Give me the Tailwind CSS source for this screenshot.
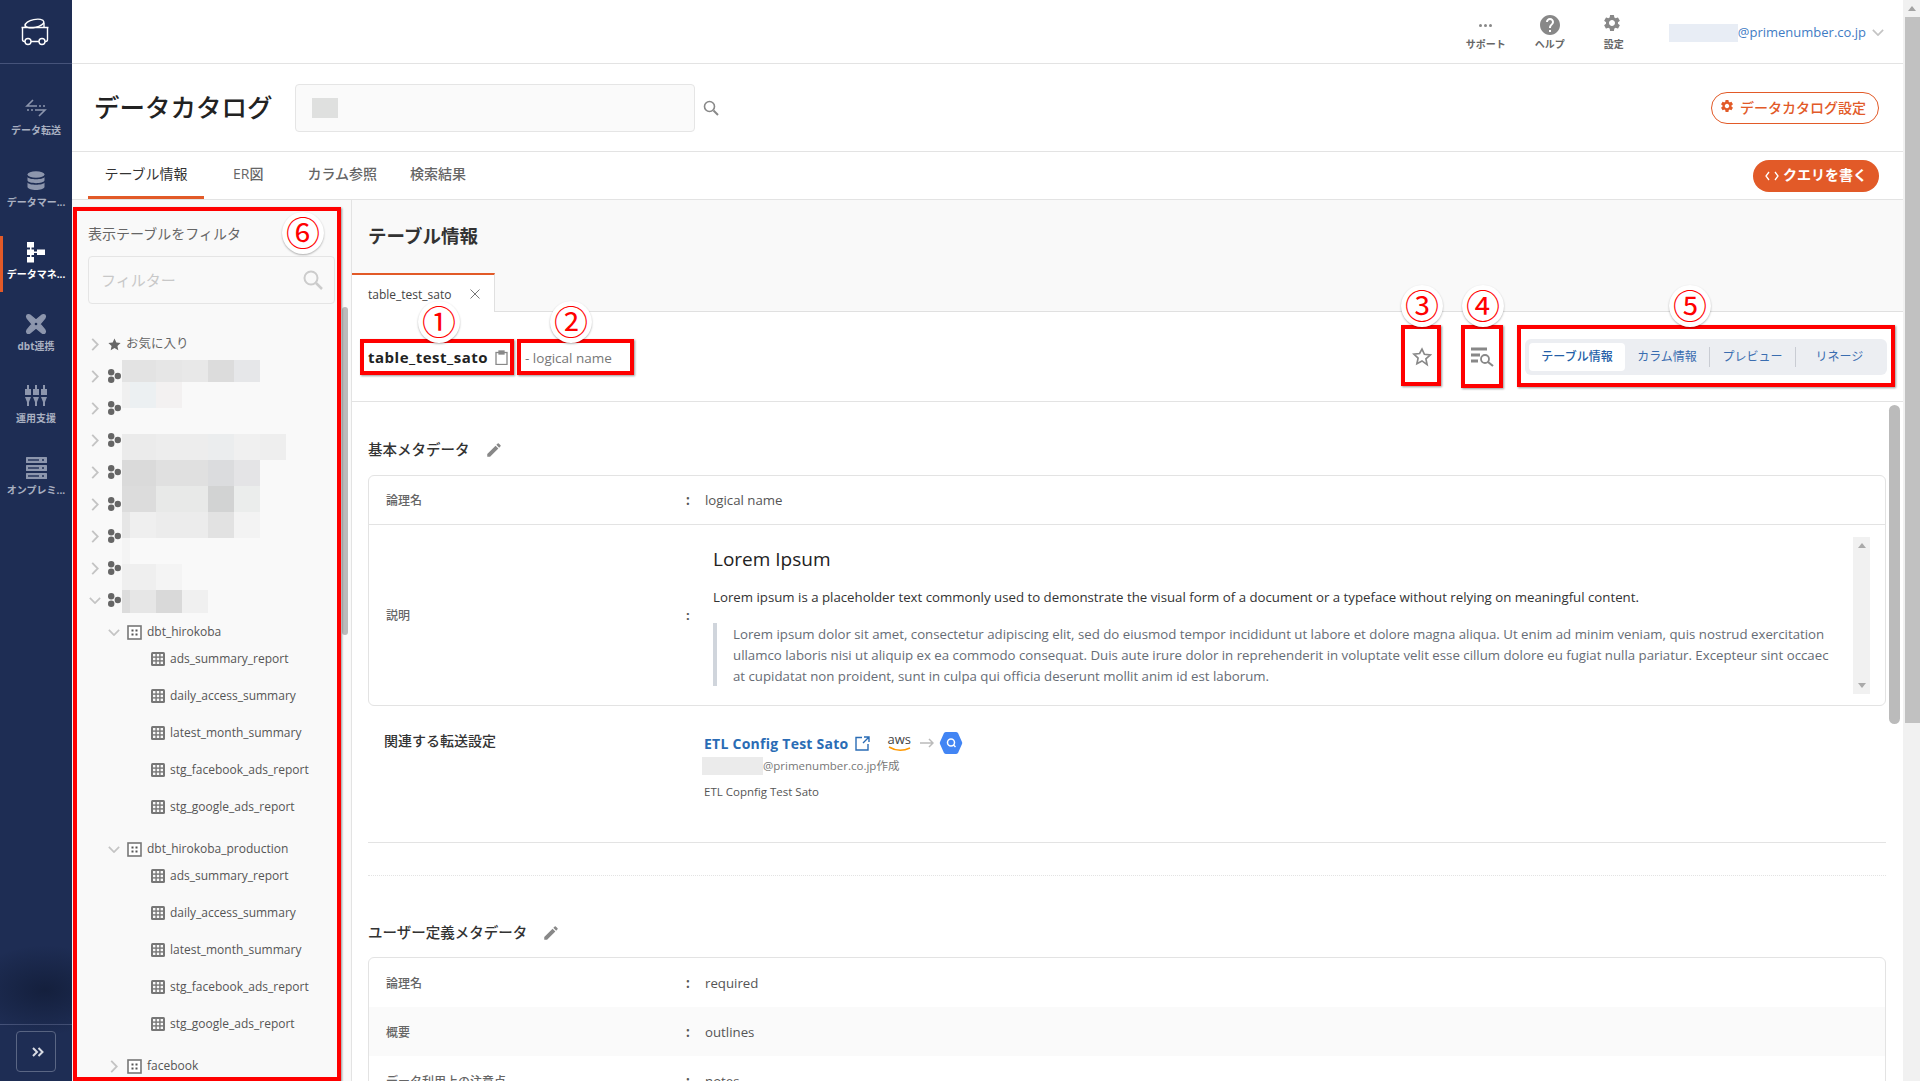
<!DOCTYPE html>
<html lang="ja">
<head>
    <meta charset="UTF-8">
    <meta name="viewport" content="width=device-width, initial-scale=1.0">
    <title>データカタログ</title>
    <script src="https://cdn.jsdelivr.net/npm/@tailwindcss/browser@4"></script>
</head>
<body class="bg-white font-['Open_Sans','Noto_Sans_CJK_JP',sans-serif] text-[#333]">

    <!-- shared icons -->
    <svg class="hidden">
        <defs>
            <symbol id="chev-r" viewBox="0 0 8 14"><polyline points="1,1 7,7 1,13" fill="none" stroke="#c4c4c4" stroke-width="2"/></symbol>
            <symbol id="chev-d" viewBox="0 0 14 8"><polyline points="1,1 7,7 13,1" fill="none" stroke="#c4c4c4" stroke-width="2"/></symbol>
            <symbol id="dataset" viewBox="0 0 13 14"><circle cx="3.2" cy="3.2" r="3.2" fill="#666"/><circle cx="3.2" cy="10.800" r="3.2" fill="#666"/><circle cx="9.800" cy="7" r="3.200" fill="#666"/></symbol>
            <symbol id="schema" viewBox="0 0 15 15"><rect x="1" y="1" width="13" height="13" fill="#fff" stroke="#777" stroke-width="1.6"/><rect x="4.5" y="4.5" width="2" height="2" fill="#555"/><rect x="8.5" y="4.5" width="2" height="2" fill="#555"/><rect x="4.5" y="8.5" width="2" height="2" fill="#555"/><rect x="8.5" y="8.5" width="2" height="2" fill="#555"/></symbol>
            <symbol id="table" viewBox="0 0 14 14"><rect width="14" height="14" rx="1.5" fill="#777"/><g fill="#f9f9f9"><rect x="2" y="2" width="2.4" height="2.4"/><rect x="5.8" y="2" width="2.4" height="2.4"/><rect x="9.6" y="2" width="2.4" height="2.4"/><rect x="2" y="5.8" width="2.4" height="2.4"/><rect x="5.8" y="5.8" width="2.4" height="2.4"/><rect x="9.6" y="5.8" width="2.4" height="2.4"/><rect x="2" y="9.6" width="2.4" height="2.4"/><rect x="5.8" y="9.6" width="2.4" height="2.4"/><rect x="9.6" y="9.6" width="2.4" height="2.4"/></g></symbol>
            <symbol id="pencil" viewBox="0 0 24 24"><path fill="#888" d="M3 17.25V21h3.75L17.81 9.94l-3.75-3.75L3 17.25zM20.71 7.04a1 1 0 0 0 0-1.41l-2.34-2.34a1 1 0 0 0-1.41 0l-1.83 1.83 3.75 3.75 1.83-1.83z"/></symbol>
            <symbol id="gear" viewBox="0 0 24 24"><path d="M19.14 12.94c.04-.3.06-.61.06-.94 0-.32-.02-.64-.07-.94l2.03-1.58a.49.49 0 0 0 .12-.61l-1.92-3.32a.488.488 0 0 0-.59-.22l-2.39.96c-.5-.38-1.03-.7-1.62-.94l-.36-2.54a.484.484 0 0 0-.48-.41h-3.84c-.24 0-.43.17-.47.41l-.36 2.54c-.59.24-1.13.57-1.62.94l-2.39-.96c-.22-.08-.47 0-.59.22L2.74 8.87c-.12.21-.08.47.12.61l2.03 1.58c-.05.3-.09.63-.09.94s.02.64.07.94l-2.03 1.58a.49.49 0 0 0-.12.61l1.92 3.32c.12.22.37.29.59.22l2.39-.96c.5.38 1.03.7 1.62.94l.36 2.54c.05.24.24.41.48.41h3.84c.24 0 .44-.17.47-.41l.36-2.54c.59-.24 1.13-.56 1.62-.94l2.39.96c.22.08.47 0 .59-.22l1.92-3.32c.12-.22.07-.47-.12-.61l-2.01-1.58zM12 15.6c-1.98 0-3.6-1.62-3.6-3.6s1.62-3.6 3.6-3.6 3.6 1.62 3.6 3.6-1.62 3.6-3.6 3.6z"/></symbol>
        </defs>
    </svg>

    <div class="relative flex h-[1081px] w-[1920px] overflow-hidden">

        <!-- Sidebar -->
        <aside class="relative flex w-[72px] shrink-0 flex-col bg-[#1e2d54] text-[10px] font-bold leading-[14px] text-[#a9b0c1]">
            <div class="mb-[28px] flex h-[64px] items-center justify-center border-b border-[#46537a] pr-[2px]">
                <svg width="30" height="30" viewBox="0 0 30 30" fill="none" stroke="#fff" stroke-width="1.4"><path d="M1.5 10.500h27M2.500 10.500v12q0 2 2 2h21q2 0 2-2v-12"/><ellipse cx="14.500" cy="6.500" rx="9.500" ry="4" transform="rotate(-12 14.500 6.500)"/><path d="M5 10.500L5.500 7.500M24 10.500L24 5.500"/><circle cx="8" cy="24.500" r="3" fill="#1e2d54"/><circle cx="22" cy="24.500" r="3" fill="#1e2d54"/></svg>
            </div>
            <div class="mb-[16px] flex h-[56px] flex-col items-center">
                <svg class="mt-[6px]" width="24" height="20" viewBox="0 0 24 20" fill="none" stroke="#8d96ad" stroke-width="1.600"><path d="M9 2L3 8H13"/><path d="M15 8h2M19 8h2" /><path d="M3 12h2M7 12h2"/><path d="M11 12H21L15 18"/></svg>
                <span class="mt-[5px]">データ転送</span>
            </div>
            <div class="mb-[16px] flex h-[56px] flex-col items-center">
                <svg class="mt-[7px]" width="18" height="20" viewBox="0 0 18 20" fill="#8d96ad"><ellipse cx="9" cy="3.5" rx="8.5" ry="3.2"/><path d="M.5 6c1 3 16 3 17 0v3.5c-1 3.5-16 3.5-17 0zM.5 11.500c1 3 16 3 17 0V16c-1 4-16 4-17 0z"/></svg>
                <span class="mt-[4px]">データマー...</span>
            </div>
            <div class="relative mb-[16px] flex h-[56px] flex-col items-center text-white">
                <span class="absolute left-0 top-0 h-[56px] w-[3px] bg-[#e25a28]"></span>
                <svg class="mt-[6px]" width="18" height="21" viewBox="0 0 18 21" fill="#fff"><rect x="0" y="0" width="7" height="5.5"/><rect x="0" y="7.5" width="7" height="5.5"/><rect x="0" y="15" width="7" height="5.5"/><rect x="10" y="7.5" width="8" height="5.5"/><rect x="3" y="5" width="1.5" height="11"/><rect x="6" y="9.5" width="5" height="1.5"/></svg>
                <span class="mt-[4px]">データマネ...</span>
            </div>
            <div class="mb-[16px] flex h-[56px] flex-col items-center">
                <svg class="mt-[5px]" width="22" height="22" viewBox="0 0 22 22" fill="#8d96ad" stroke="#8d96ad" stroke-width="1.200" stroke-linejoin="round"><path fill-rule="evenodd" d="M2 2Q3.500 1 5 2L11 7 17 2Q18.500 1 20 2 21 3.500 20 5L15 11 20 17Q21 18.500 20 20 18.500 21 17 20L11 15 5 20Q3.500 21 2 20 1 18.500 2 17L7 11 2 5Q1 3.500 2 2Z"/><circle cx="11" cy="11" r="1.300" fill="#1e2d54" stroke="none"/></svg>
                <span class="mt-[4px]">dbt連携</span>
            </div>
            <div class="mb-[16px] flex h-[56px] flex-col items-center">
                <svg class="mt-[5px]" width="22" height="22" viewBox="0 0 22 22" fill="#8d96ad"><rect x="2" y="0" width="2" height="4"/><rect x="0" y="4" width="6" height="6"/><path d="M0 12h6l-2 5v4h-2v-4z"/><rect x="10" y="0" width="2" height="4"/><rect x="8" y="4" width="6" height="6"/><path d="M8 12h6l-2 5v4h-2v-4z"/><rect x="18" y="0" width="2" height="4"/><rect x="16" y="4" width="6" height="6"/><path d="M16 12h6l-2 5v4h-2v-4z"/></svg>
                <span class="mt-[4px]">運用支援</span>
            </div>
            <div class="flex h-[56px] flex-col items-center">
                <svg class="mt-[5px]" width="21" height="22" viewBox="0 0 21 22"><g fill="#8d96ad"><rect width="21" height="6" rx=".5"/><rect y="8" width="21" height="6" rx=".5"/><rect y="16" width="21" height="6" rx=".5"/></g><g fill="#1e2d54"><rect x="2" y="2.3" width="11" height="1.4"/><rect x="2" y="10.3" width="11" height="1.4"/><rect x="2" y="18.3" width="11" height="1.4"/><circle cx="17" cy="3" r="1"/><circle cx="17" cy="11" r="1"/><circle cx="17" cy="19" r="1"/></g></svg>
                <span class="mt-[4px]">オンプレミ...</span>
            </div>
            <div class="mt-auto h-[57px] border-t border-[#46537a] pl-[16px] pt-[6px]">
                <button class="flex h-[41px] w-[40px] items-center justify-center rounded-[4px] border border-[#5a6684] pl-[3px]">
                    <svg width="12" height="10" viewBox="0 0 12 10" fill="none" stroke="#d8dbe3" stroke-width="2"><path d="M1 1l4 4-4 4M6.500 1l4 4-4 4"/></svg>
                </button>
            </div>
        </aside>

        <!-- dim spot that sits over the sidebar in the capture -->
        <div class="pointer-events-none absolute left-[-30px] top-[945px] h-[90px] w-[150px] bg-[radial-gradient(closest-side,rgba(10,18,38,.5),transparent)]"></div>

        <!-- Main -->
        <main class="flex min-w-0 flex-1 flex-col">

            <!-- Top bar -->
            <header class="flex h-[64px] shrink-0 items-center justify-end border-b border-[#e3e3e3] pr-[19px] pt-[2px]">
                <div class="mr-[24px] flex w-[40px] flex-col items-center text-[10px] font-bold leading-[14px] text-[#666]">
                    <span class="flex h-[20px] items-center gap-[2px] pt-[2px]"><i class="size-[3px] rounded-full bg-[#888]"></i><i class="size-[3px] rounded-full bg-[#888]"></i><i class="size-[3px] rounded-full bg-[#888]"></i></span>
                    <span class="mt-[2px]">サポート</span>
                </div>
                <div class="mr-[24px] flex w-[40px] flex-col items-center text-[10px] font-bold leading-[14px] text-[#666]">
                    <svg width="20" height="20" viewBox="2 2 20 20" fill="#888"><path d="M12 2C6.480 2 2 6.480 2 12s4.480 10 10 10 10-4.480 10-10S17.520 2 12 2zm1 17h-2v-2h2v2zm2.070-7.750l-.9.920C13.450 12.900 13 13.500 13 15h-2v-.5c0-1.100.450-2.100 1.170-2.830l1.240-1.260c.370-.360.590-.860.590-1.410 0-1.100-.9-2-2-2s-2 .9-2 2H8c0-2.210 1.790-4 4-4s4 1.790 4 4c0 .880-.360 1.680-.930 2.250z"/></svg>
                    <span class="mt-[2px]">ヘルプ</span>
                </div>
                <div class="mr-[35px] flex w-[40px] flex-col items-center text-[10px] font-bold leading-[14px] text-[#666]">
                    <svg class="fill-[#888]" width="20" height="20" viewBox="2 2 20 20"><use href="#gear"/></svg>
                    <span class="mt-[2px]">設定</span>
                </div>
                <div class="flex items-center">
                    <span class="h-[18px] w-[69px] bg-[#e8edf5]"></span>
                    <span class="text-[13px] text-[#3f7cc4]">@primenumber.co.jp</span>
                    <svg class="ml-[6px]" width="12" height="7" viewBox="0 0 14 8"><use href="#chev-d"/></svg>
                </div>
            </header>

            <!-- Page title -->
            <div class="flex h-[88px] shrink-0 items-center border-b border-[#e3e3e3] pl-[22px] pr-[24px]">
                <h1 class="w-[201px] shrink-0 text-[25.500px] font-medium leading-none text-[#222]">データカタログ</h1>
                <div class="flex h-[48px] w-[400px] items-center rounded-[4px] border border-[#e5e5e5] bg-[#fafafa] pl-[16px]">
                    <span class="h-[20px] w-[26px] bg-[#dfe0df]"></span>
                </div>
                <svg class="ml-[8px]" width="16" height="16" viewBox="0 0 16 16" fill="none" stroke="#888" stroke-width="1.600"><circle cx="6.500" cy="6.500" r="5"/><path d="M10.500 10.500L15 15" stroke-width="2"/></svg>
                <button class="ml-auto flex h-[32px] w-[168px] items-center justify-center gap-[4px] rounded-full border border-[#e25a28] pr-[3px] text-[14px] font-medium text-[#e25a28]">
                    <svg class="fill-[#e25a28]" width="15" height="15" viewBox="2 2 20 20"><use href="#gear"/></svg>データカタログ設定
                </button>
            </div>

            <!-- Tabs -->
            <div class="flex h-[48px] shrink-0 items-stretch border-b border-[#e3e3e3] pl-[16px] pr-[24px] text-[14px] font-medium text-[#666]">
                <a class="flex w-[116px] items-center justify-center border-b-[3px] border-[#e25a28] pb-[2px] font-normal text-[#333]">テーブル情報</a>
                <a class="ml-[29px] flex items-center pb-[5px]">ER図</a>
                <a class="ml-[44px] flex items-center pb-[5px]">カラム参照</a>
                <a class="ml-[33px] flex items-center pb-[5px]">検索結果</a>
                <div class="ml-auto flex items-center">
                    <button class="flex h-[32px] w-[126px] items-center justify-center gap-[4px] rounded-full bg-[#e25a28] pb-[2px] text-[14px] font-bold text-white">
                        <svg class="mt-[2px]" width="14" height="10" viewBox="0 0 14 10" fill="none" stroke="#fff" stroke-width="1.300"><path d="M4 1L1 5l3 4M10 1l3 4-3 4"/></svg>クエリを書く
                    </button>
                </div>
            </div>

            <div class="flex min-h-0 flex-1">

                <!-- Filter panel -->
                <section class="relative w-[280px] shrink-0 overflow-hidden border-r border-[#e3e3e3] bg-[#f9f9f9] text-[12px] font-medium text-[#555]">
                    <div class="flex h-[56px] items-center pl-[16px] pt-[10px] text-[14px] font-normal text-[#666]">表示テーブルをフィルタ</div>
                    <div class="mx-[16px] flex h-[48px] w-[247px] items-center justify-between rounded-[4px] border border-[#e5e5e5] pl-[12px] pr-[11px]">
                        <span class="text-[15px] font-normal text-[#c8c8c8]">フィルター</span>
                        <svg width="20" height="20" viewBox="0 0 20 20" fill="none" stroke="#ccc" stroke-width="2"><circle cx="8" cy="8" r="6.500"/><path d="M13 13l6 6" stroke-width="2.500"/></svg>
                    </div>

                    <!-- Tree -->
                    <div class="mt-[24px] pl-[19px]">
                        <div class="flex h-[32px] items-center"><svg class="mr-[9px]" width="8" height="13"><use href="#chev-r"/></svg><svg width="13" height="13" viewBox="0 0 24 24" fill="#666"><path d="M12 1l3.400 7.300 7.900.9-5.900 5.400 1.600 7.900L12 18.600l-7 3.900 1.600-7.900L.7 9.200l7.900-.9z"/></svg><span class="ml-[5px] text-[12.500px] font-normal text-[#666]">お気に入り</span></div>
                        <div class="flex h-[32px] items-center"><svg class="mr-[9px]" width="8" height="13"><use href="#chev-r"/></svg><svg width="13" height="14"><use href="#dataset"/></svg></div>
                        <div class="flex h-[32px] items-center"><svg class="mr-[9px]" width="8" height="13"><use href="#chev-r"/></svg><svg width="13" height="14"><use href="#dataset"/></svg></div>
                        <div class="flex h-[32px] items-center"><svg class="mr-[9px]" width="8" height="13"><use href="#chev-r"/></svg><svg width="13" height="14"><use href="#dataset"/></svg></div>
                        <div class="flex h-[32px] items-center"><svg class="mr-[9px]" width="8" height="13"><use href="#chev-r"/></svg><svg width="13" height="14"><use href="#dataset"/></svg></div>
                        <div class="flex h-[32px] items-center"><svg class="mr-[9px]" width="8" height="13"><use href="#chev-r"/></svg><svg width="13" height="14"><use href="#dataset"/></svg></div>
                        <div class="flex h-[32px] items-center"><svg class="mr-[9px]" width="8" height="13"><use href="#chev-r"/></svg><svg width="13" height="14"><use href="#dataset"/></svg></div>
                        <div class="flex h-[32px] items-center"><svg class="mr-[9px]" width="8" height="13"><use href="#chev-r"/></svg><svg width="13" height="14"><use href="#dataset"/></svg></div>
                        <div class="flex h-[32px] items-center"><svg class="-ml-[2px] mr-[7px]" width="12" height="7" viewBox="0 0 14 8"><use href="#chev-d"/></svg><svg width="13" height="14"><use href="#dataset"/></svg></div>

                        <!-- dbt_hirokoba -->
                        <div class="mt-[7px] flex h-[18px] items-center pl-[17px]"><svg class="mr-[7px]" width="12" height="7" viewBox="0 0 14 8"><use href="#chev-d"/></svg><svg class="mr-[5px]" width="15" height="15"><use href="#schema"/></svg>dbt_hirokoba</div>
                        <div class="-mt-px flex h-[37px] items-center pl-[60px]"><svg class="mr-[5px]" width="14" height="14"><use href="#table"/></svg>ads_summary_report</div>
                        <div class="flex h-[37px] items-center pl-[60px]"><svg class="mr-[5px]" width="14" height="14"><use href="#table"/></svg>daily_access_summary</div>
                        <div class="flex h-[37px] items-center pl-[60px]"><svg class="mr-[5px]" width="14" height="14"><use href="#table"/></svg>latest_month_summary</div>
                        <div class="flex h-[37px] items-center pl-[60px]"><svg class="mr-[5px]" width="14" height="14"><use href="#table"/></svg>stg_facebook_ads_report</div>
                        <div class="flex h-[37px] items-center pl-[60px]"><svg class="mr-[5px]" width="14" height="14"><use href="#table"/></svg>stg_google_ads_report</div>

                        <!-- dbt_hirokoba_production -->
                        <div class="mt-[15px] flex h-[18px] items-center pl-[17px]"><svg class="mr-[7px]" width="12" height="7" viewBox="0 0 14 8"><use href="#chev-d"/></svg><svg class="mr-[5px]" width="15" height="15"><use href="#schema"/></svg>dbt_hirokoba_production</div>
                        <div class="-mt-px flex h-[37px] items-center pl-[60px]"><svg class="mr-[5px]" width="14" height="14"><use href="#table"/></svg>ads_summary_report</div>
                        <div class="flex h-[37px] items-center pl-[60px]"><svg class="mr-[5px]" width="14" height="14"><use href="#table"/></svg>daily_access_summary</div>
                        <div class="flex h-[37px] items-center pl-[60px]"><svg class="mr-[5px]" width="14" height="14"><use href="#table"/></svg>latest_month_summary</div>
                        <div class="flex h-[37px] items-center pl-[60px]"><svg class="mr-[5px]" width="14" height="14"><use href="#table"/></svg>stg_facebook_ads_report</div>
                        <div class="flex h-[37px] items-center pl-[60px]"><svg class="mr-[5px]" width="14" height="14"><use href="#table"/></svg>stg_google_ads_report</div>

                        <!-- facebook -->
                        <div class="mt-[15px] flex h-[18px] items-center pl-[19px]"><svg class="mr-[9px]" width="8" height="13"><use href="#chev-r"/></svg><svg class="mr-[5px]" width="15" height="15"><use href="#schema"/></svg>facebook</div>
                    </div>

                    <!-- pixelated dataset names, laid over the tree (offsets from panel top, panel starts at y=200) -->
                    <div class="absolute left-[50px] top-[160px] flex h-[22px]"><i class="w-[34px] bg-[#e3e3e3]"></i><i class="w-[26px] bg-[#e6e6e6]"></i><i class="w-[26px] bg-[#e8e8e8]"></i><i class="w-[26px] bg-[#dcdcdc]"></i><i class="w-[26px] bg-[#e6e7e9]"></i></div>
                    <div class="absolute left-[50px] top-[182px] flex h-[26px]"><i class="w-[8px] bg-[#f0f0f0]"></i><i class="w-[26px] bg-[#ecf0f2]"></i><i class="w-[26px] bg-[#f3f1f1]"></i></div>
                    <div class="absolute left-[50px] top-[234px] flex h-[26px]"><i class="w-[34px] bg-[#ebebeb]"></i><i class="w-[52px] bg-[#ededed]"></i><i class="w-[26px] bg-[#ebedee]"></i><i class="w-[26px] bg-[#f0f0f0]"></i><i class="w-[26px] bg-[#eeeeee]"></i></div>
                    <div class="absolute left-[50px] top-[260px] flex h-[26px]"><i class="w-[34px] bg-[#dadada]"></i><i class="w-[52px] bg-[#e0e0e0]"></i><i class="w-[26px] bg-[#dbdcde]"></i><i class="w-[26px] bg-[#e4e4e6]"></i></div>
                    <div class="absolute left-[50px] top-[286px] flex h-[26px]"><i class="w-[34px] bg-[#dcdcdc]"></i><i class="w-[52px] bg-[#e8e9e8]"></i><i class="w-[26px] bg-[#d2d3d3]"></i><i class="w-[26px] bg-[#ebedec]"></i></div>
                    <div class="absolute left-[50px] top-[312px] flex h-[26px]"><i class="w-[8px] bg-[#e6e6e6]"></i><i class="w-[26px] bg-[#efefef]"></i><i class="w-[52px] bg-[#ececec]"></i><i class="w-[26px] bg-[#e2e2e2]"></i><i class="w-[26px] bg-[#f3f3f3]"></i></div>
                    <div class="absolute left-[50px] top-[338px] h-[26px] w-[8px] bg-[#f4f4f4]"></div>
                    <div class="absolute left-[50px] top-[364px] flex h-[26px]"><i class="w-[34px] bg-[#efefef]"></i><i class="w-[26px] bg-[#f4f4f4]"></i></div>
                    <div class="absolute left-[50px] top-[390px] flex h-[23px]"><i class="w-[8px] bg-[#dcdcdc]"></i><i class="w-[26px] bg-[#e6e6e6]"></i><i class="w-[26px] bg-[#d9d9d9]"></i><i class="w-[26px] bg-[#f0f0f0]"></i></div>

                    <!-- tree scrollbar -->
                    <div class="absolute left-[270px] top-[107px] h-[328px] w-[6px] rounded-full bg-[#bbb]"></div>

                    <!-- annotation ⑥ -->
                    <div class="pointer-events-none absolute left-[1px] top-[7px] h-[874px] w-[268px] border-4 border-[#f00] shadow-[1px_1px_2px_rgba(0,0,0,.4)]"></div>
                    <div class="absolute left-[210px] top-[12px] flex size-[42px] items-center justify-center rounded-full bg-white text-[34px] font-normal leading-none text-[#f00] shadow-[0_1px_2px_rgba(0,0,0,.3)]">⑥</div>
                </section>

                <!-- Right column -->
                <section class="relative flex min-w-0 flex-1 flex-col">
                    <div class="h-[73px] shrink-0 bg-[#f9f9f9] pl-[16px] pt-[23px] text-[18.500px] font-bold leading-[26px] text-[#333]">テーブル情報</div>
                    <div class="flex h-[39px] shrink-0 border-b border-[#e0e0e0] bg-[#f9f9f9]">
                        <div class="-mb-px flex w-[143px] items-center justify-between border-r border-t-2 border-[#e0e0e0] border-t-[#e25a28] bg-white pl-[16px] pr-[14px] pt-[2px] text-[12px] text-[#444]">
                            table_test_sato
                            <svg class="mb-[2px]" width="10" height="10" viewBox="0 0 10 10" stroke="#777" stroke-width="1"><path d="M.5.5l9 9M9.500.5l-9 9"/></svg>
                        </div>
                    </div>

                    <!-- Toolbar with the annotated parts -->
                    <div class="flex h-[90px] shrink-0 items-center border-b border-[#e3e3e3] pl-[8px] pr-[8px]">
                        <div class="flex h-[36px] w-[154px] items-center border-4 border-[#f00] pl-[4px] pt-[2px] shadow-[1px_1px_2px_rgba(0,0,0,.4)]">
                            <span class="text-[15px] font-bold leading-none tracking-[.5px] text-[#222]">table_test_sato</span>
                            <svg class="ml-[7px]" width="13" height="15" viewBox="0 0 13 15" fill="none" stroke="#888" stroke-width="1.300"><rect x="1" y="2.500" width="11" height="12"/><rect x="4" y="1" width="5" height="3" fill="#888"/></svg>
                        </div>
                        <div class="ml-[3px] flex h-[36px] w-[117px] items-center border-4 border-[#f00] pl-[4px] pt-[3px] text-[13.500px] text-[#777] shadow-[1px_1px_2px_rgba(0,0,0,.4)]">- logical name</div>

                        <div class="mb-[3px] ml-auto flex h-[61px] w-[40px] items-center justify-center border-4 border-[#f00] pl-px pt-[3px] shadow-[1px_1px_2px_rgba(0,0,0,.4)]">
                            <svg width="20" height="20" viewBox="0 0 24 24" fill="none" stroke="#888" stroke-width="2"><path d="M12 2.500l2.900 6.300 6.900.8-5.100 4.700 1.400 6.800L12 16.700l-6.100 3.400 1.400-6.800-5.100-4.700 6.900-.8z"/></svg>
                        </div>
                        <div class="mb-[1px] ml-[20px] flex h-[63px] w-[42px] items-center justify-center border-4 border-[#f00] pt-[2px] shadow-[1px_1px_2px_rgba(0,0,0,.4)]">
                            <svg width="24" height="20" viewBox="0 0 24 20" fill="none" stroke="#888"><path d="M1 2h16M1 8h9M1 14h7" stroke-width="2.800"/><circle cx="15" cy="12" r="4" stroke-width="1.800"/><path d="M18 15l5 4" stroke-width="2.200"/></svg>
                        </div>
                        <div class="mb-[1px] ml-[14px] flex h-[62px] w-[378px] items-center justify-center border-4 border-[#f00] pt-[2px] shadow-[1px_1px_2px_rgba(0,0,0,.4)]">
                            <div class="flex h-[36px] w-[362px] items-center rounded-[6px] bg-[#eceef2] pl-[4px] text-[12px] text-[#3a6db0]">
                                <span class="flex h-[28px] w-[96px] items-center justify-center rounded-[4px] bg-white font-medium text-[#255fa8]">テーブル情報</span>
                                <span class="flex h-[20px] w-[85px] items-center justify-center border-r border-[#c9ccd3]">カラム情報</span>
                                <span class="flex h-[20px] w-[86px] items-center justify-center border-r border-[#c9ccd3]">プレビュー</span>
                                <span class="flex h-[20px] w-[87px] items-center justify-center">リネージ</span>
                            </div>
                        </div>
                    </div>

                    <!-- Scrolling content -->
                    <div class="min-h-0 flex-1 overflow-hidden pl-[16px] pr-[17px] pt-[37px]">
                        <div class="flex h-[20px] items-center pt-[2px] text-[14.500px] font-medium text-[#333]">基本メタデータ<svg class="ml-[15px]" width="18" height="18"><use href="#pencil"/></svg></div>

                        <div class="mt-[16px] rounded-[6px] border border-[#e3e3e3]">
                            <div class="flex h-[49px] items-center border-b border-[#e3e3e3] pl-[17px] pt-[2px] text-[13.250px] text-[#555]">
                                <span class="w-[300px] text-[12px] font-medium text-[#666]">論理名</span>
                                <span class="w-[19px] font-bold">:</span>
                                <span>logical name</span>
                            </div>
                            <div class="flex h-[180px] pl-[17px]">
                                <span class="w-[300px] self-center pt-[2px] text-[12px] font-medium text-[#666]">説明</span>
                                <span class="w-[27px] self-center pt-[2px] text-[13px] font-bold text-[#555]">:</span>
                                <div class="w-[1120px] pt-[19px]">
                                    <h3 class="text-[19px] font-medium leading-[30px] text-[#222]">Lorem Ipsum</h3>
                                    <p class="mt-[13px] whitespace-nowrap text-[13.250px] leading-[20px] text-[#333]">Lorem ipsum is a placeholder text commonly used to demonstrate the visual form of a document or a typeface without relying on meaningful content.</p>
                                    <blockquote class="mt-[16px] h-[63px] border-l-4 border-[#d0d5dc] pl-[16px] pt-px text-[13.250px] leading-[21px] text-[#666c75]">
                                        <span class="block whitespace-nowrap">Lorem ipsum dolor sit amet, consectetur adipiscing elit, sed do eiusmod tempor incididunt ut labore et dolore magna aliqua. Ut enim ad minim veniam, quis nostrud exercitation</span>
                                        <span class="block whitespace-nowrap">ullamco laboris nisi ut aliquip ex ea commodo consequat. Duis aute irure dolor in reprehenderit in voluptate velit esse cillum dolore eu fugiat nulla pariatur. Excepteur sint occaec</span>
                                        <span class="block whitespace-nowrap">at cupidatat non proident, sunt in culpa qui officia deserunt mollit anim id est laborum.</span>
                                    </blockquote>
                                </div>
                                <div class="ml-auto mr-[15px] mt-[12px] flex h-[157px] w-[17px] flex-col items-center justify-between bg-[#f1f1f1] py-[6px]">
                                    <span class="size-0 border-x-[4px] border-b-[5px] border-x-transparent border-b-[#aaa]"></span>
                                    <span class="size-0 border-x-[4px] border-t-[5px] border-x-transparent border-t-[#aaa]"></span>
                                </div>
                            </div>
                        </div>

                        <!-- Related transfer -->
                        <div class="flex h-[137px] border-b border-[#e3e3e3] pl-[16px] pt-[25px]">
                            <span class="w-[320px] text-[14px] font-medium leading-[20px] text-[#333]">関連する転送設定</span>
                            <div>
                                <div class="flex h-[24px] items-center">
                                    <span class="text-[14px] font-bold tracking-[.25px] text-[#2a6cb5]">ETL Config Test Sato</span>
                                    <svg class="ml-[6px]" width="15" height="15" viewBox="0 0 15 15" fill="none" stroke="#2a6cb5" stroke-width="1.400"><path d="M7 1.500H1v12.500h12V8M8 7l6-6M9 1h5v5"/></svg>
                                    <span class="relative ml-[18px] h-[22px] w-[24px] text-[13px] font-medium leading-[14px] text-[#444]">aws<svg class="absolute bottom-[1px] left-0" width="24" height="7" viewBox="0 0 24 7" fill="none" stroke="#f90" stroke-width="1.500"><path d="M1 1q10 6 21 1"/></svg></span>
                                    <svg class="ml-[8px]" width="14" height="10" viewBox="0 0 14 10" fill="none" stroke="#bbb" stroke-width="1.500"><path d="M0 5h13M9 1l4 4-4 4"/></svg>
                                    <svg class="ml-[5px]" width="24" height="24" viewBox="0 0 24 24"><path d="M7 1h10q1 0 2 1l4 9q.5 1 0 2l-4 9q-1 1-2 1H7q-1 0-2-1l-4-9q-.5-1 0-2l4-9q1-1 2-1z" fill="#4285f4"/><circle cx="12" cy="11.500" r="3.500" fill="none" stroke="#fff" stroke-width="1.500"/><path d="M14.500 14l2 2" stroke="#fff" stroke-width="1.500"/></svg>
                                </div>
                                <div class="-ml-[2px] mt-[2px] flex h-[18px] items-center text-[11.500px] text-[#777]"><span class="h-[18px] w-[61px] bg-[#ebebeb]"></span>@primenumber.co.jp作成</div>
                                <div class="mt-[9px] text-[11.500px] leading-[16px] text-[#555]">ETL Copnfig Test Sato</div>
                            </div>
                        </div>

                        <div class="h-[33px] border-b border-dotted border-[#e3e3e3]"></div>

                        <div class="mt-[46px] flex h-[20px] items-center pt-[2px] text-[14.500px] font-medium text-[#333]">ユーザー定義メタデータ<svg class="ml-[15px]" width="18" height="18"><use href="#pencil"/></svg></div>

                        <div class="mt-[15px] rounded-[6px] border border-[#e3e3e3] text-[13.250px] text-[#555]">
                            <div class="flex h-[49px] items-center pl-[17px] pt-[2px]">
                                <span class="w-[300px] text-[12px] font-medium text-[#666]">論理名</span>
                                <span class="w-[19px] font-bold">:</span>
                                <span>required</span>
                            </div>
                            <div class="flex h-[49px] items-center bg-[#fafafa] pl-[17px] pt-[2px]">
                                <span class="w-[300px] text-[12px] font-medium text-[#666]">概要</span>
                                <span class="w-[19px] font-bold">:</span>
                                <span>outlines</span>
                            </div>
                            <div class="flex h-[49px] items-center pl-[17px] pt-[2px]">
                                <span class="w-[300px] text-[12px] font-medium text-[#666]">データ利用上の注意点</span>
                                <span class="w-[19px] font-bold">:</span>
                                <span>notes</span>
                            </div>
                        </div>
                    </div>

                    <!-- content scrollbar -->
                    <div class="absolute left-[1537px] top-[205px] h-[319px] w-[11px] rounded-full bg-[#bbb]"></div>

                    <!-- annotations ①–⑤ -->
                    <div class="absolute left-[66px] top-[101px] flex size-[42px] items-center justify-center rounded-full bg-white text-[34px] leading-none text-[#f00] shadow-[0_1px_2px_rgba(0,0,0,.3)]">①</div>
                    <div class="absolute left-[198px] top-[101px] flex size-[42px] items-center justify-center rounded-full bg-white text-[34px] leading-none text-[#f00] shadow-[0_1px_2px_rgba(0,0,0,.3)]">②</div>
                    <div class="absolute left-[1049px] top-[85px] flex size-[42px] items-center justify-center rounded-full bg-white text-[34px] leading-none text-[#f00] shadow-[0_1px_2px_rgba(0,0,0,.3)]">③</div>
                    <div class="absolute left-[1110px] top-[85px] flex size-[42px] items-center justify-center rounded-full bg-white text-[34px] leading-none text-[#f00] shadow-[0_1px_2px_rgba(0,0,0,.3)]">④</div>
                    <div class="absolute left-[1317px] top-[85px] flex size-[42px] items-center justify-center rounded-full bg-white text-[34px] leading-none text-[#f00] shadow-[0_1px_2px_rgba(0,0,0,.3)]">⑤</div>
                </section>
            </div>
        </main>

        <!-- Page scrollbar -->
        <div class="flex w-[17px] shrink-0 flex-col items-center bg-[#f1f1f1]">
            <span class="mt-[6px] size-0 border-x-[4px] border-b-[5px] border-x-transparent border-b-[#a3a3a3]"></span>
            <span class="ml-[2px] mt-[6px] h-[706px] w-[15px] bg-[#c1c1c1]"></span>
        </div>
    </div>

</body>
</html>
